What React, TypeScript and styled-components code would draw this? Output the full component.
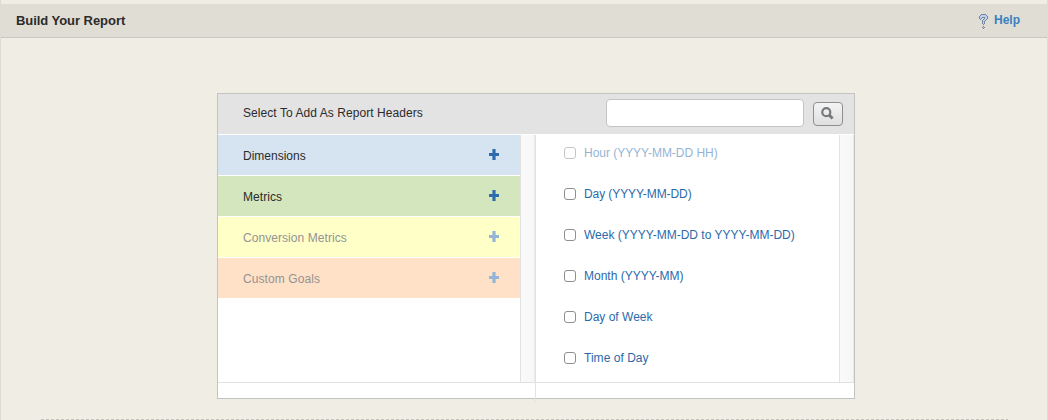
import React from "react";
import styled, { createGlobalStyle } from "styled-components";

const GlobalStyle = createGlobalStyle`
  *, *::before, *::after { box-sizing: border-box; }
  body {
    margin: 0;
    background: #f0ede5;
    font-family: "Liberation Sans", Arial, sans-serif;
    font-size: 12px;
    color: #2b2b2b;
  }
`;

const Page = styled.main`
  height: 420px;
  overflow: hidden;
  display: flex;
  flex-direction: column;
  padding-top: 4px;
  border-left: 1px solid #dfdcd5;
  border-right: 1px solid #dfdcd5;
`;

const TitleBar = styled.header`
  height: 34px;
  flex: none;
  display: flex;
  align-items: center;
  justify-content: space-between;
  padding: 0 27px 0 15px;
  background: #e0ddd5;
  border-bottom: 1px solid #c9c7c1;
`;

const Title = styled.h1`
  margin: 0;
  font-size: 13px;
  line-height: 16px;
  font-weight: bold;
`;

const HelpLink = styled.a`
  display: flex;
  align-items: center;
  gap: 6px;
  color: #3a80c0;
  font-size: 12px;
  line-height: 16px;
  font-weight: bold;
  margin-bottom: 1px;
`;

const HelpIcon = styled.svg`
  width: 9px;
  height: 15px;
  margin-top: 3px;
`;

const Panel = styled.section`
  width: 638px;
  height: 306px;
  flex: none;
  margin: 55px 0 0 216px;
  display: flex;
  flex-direction: column;
  background: #fff;
  border: 1px solid #c3c3c3;
`;

const PanelHeader = styled.div`
  height: 40px;
  margin-bottom: 1px;
  flex: none;
  display: flex;
  align-items: center;
  padding: 0 11px 0 25px;
  background: #e3e3e3;
`;

const PanelTitle = styled.h2`
  flex: 1;
  margin: 0 0 2px;
  font-size: 12px;
  line-height: 16px;
  font-weight: normal;
`;

const SearchInput = styled.input`
  width: 198px;
  height: 28px;
  margin: 0 9px 2px 0;
  border: 1px solid #c4c4c4;
  border-radius: 4px;
  background: #fff;
  outline: none;
`;

const SearchButton = styled.button`
  width: 30px;
  height: 24px;
  display: flex;
  align-items: center;
  justify-content: center;
  padding: 0 2px 2px 0;
  border: 1px solid #8f8f8f;
  border-radius: 4px;
  background: linear-gradient(#f4f4f4, #dfdfdf);
`;

const Columns = styled.div`
  flex: none;
  height: 248px;
  display: flex;
  border-bottom: 1px solid #e1e1e1;
`;

const Categories = styled.div`
  width: 302px;
  display: flex;
  flex-direction: column;
  gap: 1px;
`;

const Category = styled.div<{ $tone: string; $muted?: boolean }>`
  height: 40px;
  flex: none;
  display: flex;
  align-items: center;
  justify-content: space-between;
  padding: 0 21px 0 25px;
  background: ${(p) => p.$tone};
  color: ${(p) => (p.$muted ? "#939393" : "#2b2b2b")};
  span {
    margin-top: 2px;
  }
  svg {
    color: ${(p) => (p.$muted ? "#94b5d6" : "#2f6cae")};
    margin-bottom: 1px;
  }
`;

const Track = styled.div<{ $width: number }>`
  width: ${(p) => p.$width}px;
  flex: none;
  background: linear-gradient(90deg, #fafafa, #f7f7f7);
  border-left: 1px solid #e3e3e3;
  border-right: 1px solid #e8e8e8;
`;

const Fields = styled.div`
  flex: 1;
  border-left: 1px solid #e3e3e3;
  padding-left: 28px;
  height: 267px;
`;

const Field = styled.label<{ $muted?: boolean }>`
  height: 41px;
  display: flex;
  align-items: center;
  gap: 8px;
  padding-bottom: 5px;
  color: #2a6aab;
  opacity: ${(p) => (p.$muted ? 0.5 : 1)};
`;

const Check = styled.input`
  appearance: none;
  width: 12px;
  height: 12px;
  margin: 0 0 1px;
  border: 1px solid #8f8f8f;
  border-radius: 3px;
  background: #fff;
`;

const Label = styled.span<{ $spacing: number }>`
  line-height: 16px;
  letter-spacing: ${(p) => p.$spacing}px;
  white-space: nowrap;
`;

const Divider = styled.div`
  height: 1px;
  flex: none;
  margin: 20px 39px 0 40px;
  background: repeating-linear-gradient(90deg, #c5c3bd 0 3px, transparent 3px 5px);
`;

const categories = [
  { name: "Dimensions", tone: "#d6e3f0", spacing: 0 },
  { name: "Metrics", tone: "#d3e6be", spacing: 0.05 },
  { name: "Conversion Metrics", tone: "#ffffc8", muted: true, spacing: 0.06 },
  { name: "Custom Goals", tone: "#ffe1c8", muted: true, spacing: 0.08 },
];

const fields = [
  { name: "Hour (YYYY-MM-DD HH)", muted: true, spacing: -0.03 },
  { name: "Day (YYYY-MM-DD)", spacing: -0.08 },
  { name: "Week (YYYY-MM-DD to YYYY-MM-DD)", spacing: 0 },
  { name: "Month (YYYY-MM)", spacing: 0 },
  { name: "Day of Week", spacing: 0 },
  { name: "Time of Day", spacing: 0.03 },
];

const Plus = () => (
  <svg width="10" height="11" viewBox="0 0 10 11">
    <path fill="currentColor" d="M3.4 0h3.2v4H10v3H6.6v4H3.4V7H0V4h3.4z" />
  </svg>
);

export default function App() {
  return (
    <>
      <GlobalStyle />
      <Page>
        <TitleBar>
          <Title>
            <Label $spacing={-0.05}>Build Your Report</Label>
          </Title>
          <HelpLink>
            <HelpIcon viewBox="0 0 9 15" shapeRendering="crispEdges">
              <path
                fill="#75849f"
                d="M2 0h5v1H2zM1 1h1v1H1zM7 1h1v1H7zM0 2h1v3H0zM8 2h1v3H8zM3 3h3v1H3zM2 4h1v1H2zM5 4h1v1H5zM1 5h1v1H1zM4 5h1v1H4zM7 5h1v1H7zM3 6h1v4H3zM6 6h1v1H6zM5 7h1v3H5zM4 10h1v1H4zM4 12h1v1H4zM3 13h1v1H3zM5 13h1v1H5zM4 14h1v1H4z"
              />
              <path
                fill="#bdd0ec"
                d="M2 1h5v1H2zM1 2h7v1H1zM1 3h2v1H1zM6 3h2v2H6zM1 4h1v1H1zM5 5h2v1H5zM4 6h2v1H4zM4 7h1v3H4zM4 13h1v1H4z"
              />
            </HelpIcon>
            <Label $spacing={0}>Help</Label>
          </HelpLink>
        </TitleBar>
        <Panel>
          <PanelHeader>
            <PanelTitle>
              <Label $spacing={0.065}>Select To Add As Report Headers</Label>
            </PanelTitle>
            <SearchInput aria-label="Search headers" />
            <SearchButton aria-label="Search">
              <svg width="13" height="13" viewBox="0 0 13 13" fill="none" stroke="#767a7d">
                <circle cx="5.3" cy="5.2" r="4" strokeWidth="2.2" />
                <path d="m8.2 8.1 3.4 3.4" strokeWidth="2.9" />
              </svg>
            </SearchButton>
          </PanelHeader>
          <Columns>
            <Categories>
              {categories.map((c) => (
                <Category key={c.name} $tone={c.tone} $muted={c.muted}>
                  <Label $spacing={c.spacing}>{c.name}</Label>
                  <Plus />
                </Category>
              ))}
            </Categories>
            <Track $width={15} />
            <Fields>
              {fields.map((f) => (
                <Field key={f.name} $muted={f.muted}>
                  <Check type="checkbox" disabled={f.muted} />
                  <Label $spacing={f.spacing}>{f.name}</Label>
                </Field>
              ))}
            </Fields>
            <Track $width={15} />
          </Columns>
        </Panel>
        <Divider />
      </Page>
    </>
  );
}
